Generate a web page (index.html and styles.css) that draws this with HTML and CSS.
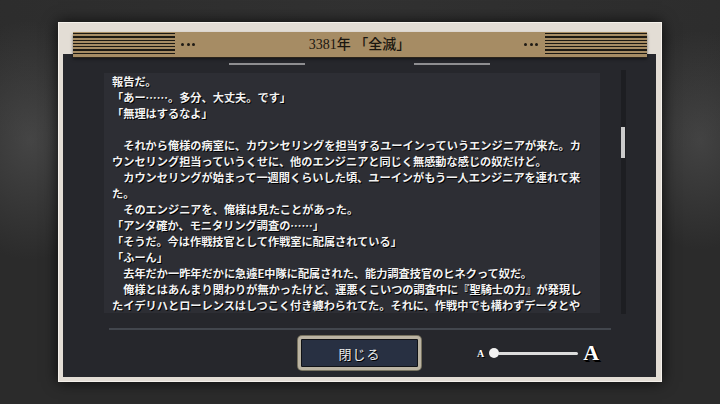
FILE: index.html
```html
<!DOCTYPE html>
<html lang="ja">
<head>
<meta charset="utf-8">
<title>3381年 「全滅」</title>
<link rel="stylesheet" href="styles.css">
</head>
<body>
<div class="stage">
  <div class="frame">
    <header class="titlebar">
      <div class="stripes"></div>
      <div class="dots dots-left"><i></i><i></i><i></i></div>
      <h1 class="title">3381年 「全滅」</h1>
      <div class="dots dots-right"><i></i><i></i><i></i></div>
      <div class="stripes"></div>
    </header>
    <main class="panel">
      <div class="tabs"><span></span><span></span></div>
      <div class="reader">
        <div class="text">報告だ。<br>「あー……。多分、大丈夫。です」<br>「無理はするなよ」<br><br>　それから俺様の病室に、カウンセリングを担当するユーインっていうエンジニアが来た。カ<br>ウンセリング担当っていうくせに、他のエンジニアと同じく無感動な感じの奴だけど。<br>　カウンセリングが始まって一週間くらいした頃、ユーインがもう一人エンジニアを連れて来<br>た。<br>　そのエンジニアを、俺様は見たことがあった。<br>「アンタ確か、モニタリング調査の……」<br>「そうだ。今は作戦技官として作戦室に配属されている」<br>「ふーん」<br>　去年だか一昨年だかに急遽E中隊に配属された、能力調査技官のヒネクって奴だ。<br>　俺様とはあんまり関わりが無かったけど、運悪くこいつの調査中に『聖騎士の力』が発現し<br>たイデリハとローレンスはしつこく付き纏わられてた。それに、作戦中でも構わずデータとや</div>
        <div class="scroll"><div class="thumb"></div></div>
      </div>
      <div class="divider"></div>
      <div class="footer">
        <button class="close">閉じる</button>
        <div class="slider">
          <span class="a-small">A</span>
          <span class="knob"></span>
          <span class="line"></span>
          <span class="a-big">A</span>
        </div>
      </div>
    </main>
  </div>
</div>
</body>
</html>
```
FILE: styles.css
```css
html, body {
  margin: 0;
  padding: 0;
}
body {
  width: 720px;
  height: 404px;
  overflow: hidden;
  font-family: "Noto Sans CJK JP", sans-serif;
  background:
    radial-gradient(ellipse 90px 120px at 30px 140px, rgba(90,90,90,.55), transparent),
    radial-gradient(ellipse 80px 110px at 700px 140px, rgba(90,90,90,.5), transparent),
    radial-gradient(ellipse 500px 200px at 360px 0px, rgba(60,60,60,.4), transparent),
    #2b2b2b;
}
.stage {
  padding: 22px 0 0 58px;
}
.frame {
  width: 604px;
  height: 360px;
  box-sizing: border-box;
  background: #e3ddd5;
  padding: 10px 6px 5px 5px;
  display: flex;
  flex-direction: column;
  box-shadow: 0 0 14px rgba(0,0,0,.75), inset 0 0 0 1px #f5f1eb;
}
.titlebar {
  height: 25px;
  margin: 0 9px 0 10px;
  position: relative;
  z-index: 1;
  display: flex;
  align-items: center;
  background: #a68c64;
  box-shadow: 0 1px 0 #2a241b, 0 2px 3px rgba(0,0,0,.5);
}
.stripes {
  width: 102px;
  align-self: stretch;
  box-sizing: border-box;
  padding: 1px 0 3px;
  background: repeating-linear-gradient(to bottom, #1c1913 0 1.3px, #a68c64 1.3px 3.3px);
  background-clip: content-box;
  background-origin: content-box;
}
.dots {
  display: flex;
  gap: 2.5px;
}
.dots i {
  width: 3px;
  height: 3px;
  border-radius: 50%;
  background: #1e1a14;
}
.dots-left { margin-left: 6px; }
.dots-right { margin-right: 7px; }
.title {
  flex: 1;
  margin: 0;
  text-align: center;
  font-family: "Liberation Serif", "Noto Sans CJK JP", serif;
  font-weight: 500;
  font-size: 14px;
  color: #1a160f;
  line-height: 25px;
}
.panel {
  flex: 1;
  margin-top: -3px;
  background: #26272c;
  display: flex;
  flex-direction: column;
}
.tabs {
  display: flex;
  justify-content: center;
  gap: 109px;
  margin-top: 9px;
}
.tabs span {
  width: 76px;
  height: 2px;
  background: #8e8e91;
}
.reader {
  display: flex;
  align-items: flex-start;
  margin-top: 8px;
  padding-left: 41px;
}
.text {
  width: 496px;
  height: 240px;
  box-sizing: border-box;
  padding: 0 0 0 8px;
  background: #2d2e34;
  overflow: hidden;
  white-space: nowrap;
  font-size: 11.2px;
  line-height: 16px;
  font-weight: 700;
  color: #f3f3f3;
  text-shadow: 1px 1px 0 #000;
}
.scroll {
  margin-left: 21px;
  margin-top: -3px;
  width: 5px;
  height: 244px;
  background: #1d1e22;
}
.thumb {
  margin-top: 57px;
  width: 4px;
  height: 31px;
  background: #cbcbcb;
}
.divider {
  margin: 14px 0 0 46px;
  width: 502px;
  height: 2px;
  background: #42464d;
}
.footer {
  display: flex;
  align-items: center;
  margin-top: 6px;
  padding-left: 235px;
}
.close {
  width: 123px;
  height: 34px;
  box-sizing: border-box;
  border: 3px solid #bbb4a3;
  border-radius: 4px;
  background: #283042;
  box-shadow: inset 0 0 0 1px #101216, 0 0 0 1px #77725f;
  color: #ececec;
  font-family: "Noto Sans CJK JP", sans-serif;
  font-size: 13px;
  letter-spacing: 1px;
  padding: 0;
  text-shadow: 1px 1px 0 #000;
}
.slider {
  display: flex;
  align-items: center;
  margin-left: 56px;
  height: 34px;
}
.a-small {
  font-family: "Liberation Serif", serif;
  font-weight: 700;
  font-size: 10px;
  color: #fff;
  text-shadow: 1px 1px 0 #000;
  margin-right: 5px;
}
.knob {
  width: 10px;
  height: 10px;
  border-radius: 50%;
  background: #f2f2f2;
  position: relative;
  z-index: 1;
}
.line {
  width: 80px;
  height: 3px;
  margin-left: -1px;
  border-radius: 2px;
  background: #dcdcdc;
}
.a-big {
  margin-left: 5px;
  font-family: "Liberation Serif", serif;
  font-weight: 700;
  font-size: 22px;
  line-height: 22px;
  color: #fff;
  text-shadow: 1px 1px 0 #000, 2px 2px 0 #000;
}
```
